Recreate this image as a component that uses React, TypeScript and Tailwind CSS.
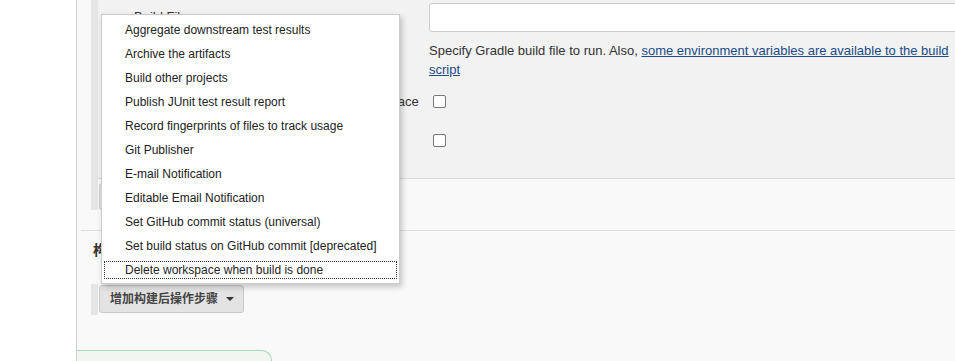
import React from "react";

const menuItems = [
  "Aggregate downstream test results",
  "Archive the artifacts",
  "Build other projects",
  "Publish JUnit test result report",
  "Record fingerprints of files to track usage",
  "Git Publisher",
  "E-mail Notification",
  "Editable Email Notification",
  "Set GitHub commit status (universal)",
  "Set build status on GitHub commit [deprecated]",
  "Delete workspace when build is done",
];

function Checkbox() {
  return <span className="block w-[13px] h-[13px] border border-[#767676] rounded-[2px] bg-white" />;
}

function GradleChunk() {
  return (
    <div className="flex h-[212px] ml-[14px]">
      <div className="w-[7px] shrink-0 bg-[#e5e5e5]" />
      <div className="flex-1 min-w-0 flex flex-col overflow-hidden">
        {/* build step form */}
        <div className="h-[179px] bg-[#f2f2f2] border-b border-[#d9d9d9] text-[13px] text-[#333]">
          <div className="flex">
            <div className="w-[331px] shrink-0 pl-[36px] pt-[9px] leading-[16px]">Build File</div>
            <div className="flex-1 min-w-0">
              <div className="mt-[3px] h-[29px] w-[600px] bg-white border border-[#cccccc] rounded-[3px]" />
              <p className="mt-[9px] w-[526px] leading-[19px]">
                Specify Gradle build file to run. Also,{" "}
                <a className="text-[#204a87] underline">some environment variables are available to the build script</a>
              </p>
            </div>
          </div>
          <div className="flex items-center mt-[16px] h-[13px]">
            <div className="w-[331px] shrink-0 pl-[36px] whitespace-nowrap leading-[16px]">Force GRADLE_USER_HOME to use workspace</div>
            <div className="ml-[4px]">
              <Checkbox />
            </div>
          </div>
          <div className="flex items-center mt-[26px] h-[13px]">
            <div className="w-[331px] shrink-0 pl-[36px] whitespace-nowrap leading-[16px]">Use Gradle Wrapper</div>
            <div className="ml-[4px]">
              <Checkbox />
            </div>
          </div>
        </div>
        {/* delete row */}
        <div className="pt-[4px] pl-[1px]">
          <button className="h-[27px] px-[10px] bg-[#e4e4e4] border border-[#cccccc] rounded-[3px] text-[12px] text-[#333]">删除</button>
        </div>
      </div>
    </div>
  );
}

export default function App() {
  return (
    <div className="relative flex w-[955px] h-[361px] overflow-hidden bg-white font-['Liberation_Sans','Noto_Sans_CJK_SC',sans-serif]">
      <div className="w-[76px] shrink-0 bg-white" />
      <div className="flex-1 min-w-0 overflow-hidden flex flex-col bg-[#f9f9f9] border-l border-[#d0d0d0]">
        <GradleChunk />

        <div className="mt-[20px] ml-[4px] border-t border-[#dddddd]" />
        <h3 className="pt-[9px] pl-[16px] text-[14px] leading-[20px] font-bold text-[#333]">构建后操作</h3>

        <div className="flex mt-[24px] ml-[14px]">
          <div className="w-[7px] h-[31px] bg-[#e5e5e5]" />
          <button className="ml-[1px] mt-[1px] h-[28px] flex items-center pl-[10px] pr-[9px] bg-[#e3e3e3] border border-[#c9c9c9] rounded-[3px] text-[12px] font-bold text-[#444]">
            增加构建后操作步骤
            <span className="ml-[8px] w-0 h-0 border-x-[4px] border-x-transparent border-t-[4px] border-t-[#333]" />
          </button>
        </div>

        <div className="mt-[35px] -ml-[1px] w-[196px] h-[20px] shrink-0 bg-[#eff7ef] border-t border-r border-l border-[#a9d6b8] rounded-tr-[10px]" />
      </div>

      {/* dropdown menu */}
      <div className="absolute left-[101px] top-[14px] w-[299px] pt-[3px] pb-[1px] bg-white border border-[#cccccc] shadow-[2px_3px_6px_rgba(0,0,0,0.22)] text-[12px] text-[#222]">
        {menuItems.map((item, i) => (
          <div key={item} className="h-[24px] px-[2px] pt-[3px]">
            <div
              className={
                "h-[18px] leading-[16px] pl-[20px] border " +
                (i === menuItems.length - 1 ? "border-dotted border-[#333]" : "border-transparent")
              }
            >
              {item}
            </div>
          </div>
        ))}
      </div>
    </div>
  );
}
